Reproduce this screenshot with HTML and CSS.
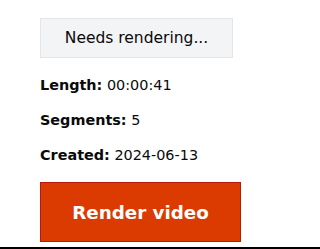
FILE: index.html
```html
<!DOCTYPE html>
<html>
<head>
<meta charset="utf-8">
<link rel="stylesheet" href="styles.css">
</head>
<body>
<div class="panel">
  <div class="status">Needs rendering...</div>
  <div class="meta">
    <p class="row"><b>Length:</b> 00:00:41</p>
    <p class="row"><b>Segments:</b> 5</p>
    <p class="row"><b>Created:</b> 2024-06-13</p>
  </div>
  <button class="render">Render video</button>
</div>
</body>
</html>
```
FILE: styles.css
```css
html, body {
  margin: 0;
  padding: 0;
  background: #fff;
}
body {
  font-family: "DejaVu Sans", sans-serif;
  color: #0a0a0a;
}
.panel {
  display: flex;
  flex-direction: column;
  align-items: flex-start;
  padding: 18px 0 5px 40px;
  border-bottom: 2px solid #000;
}
.status {
  box-sizing: border-box;
  width: 193px;
  height: 40px;
  display: flex;
  align-items: center;
  justify-content: center;
  background: #f3f4f6;
  border: 1px solid #e3e5e8;
  font-size: 15.5px;
}
.meta {
  display: flex;
  flex-direction: column;
  gap: 11px;
  margin-top: 15px;
}
.row {
  margin: 0;
  font-size: 14.4px;
  line-height: 24px;
}
.row b {
  font-weight: 700;
}
.render {
  box-sizing: border-box;
  margin-top: 15px;
  width: 201px;
  height: 60px;
  background: #db3b00;
  border: 1px solid #b8190f;
  color: #fff;
  font-family: "DejaVu Sans", sans-serif;
  font-weight: 700;
  font-size: 18.3px;
  padding: 0;
}
```
